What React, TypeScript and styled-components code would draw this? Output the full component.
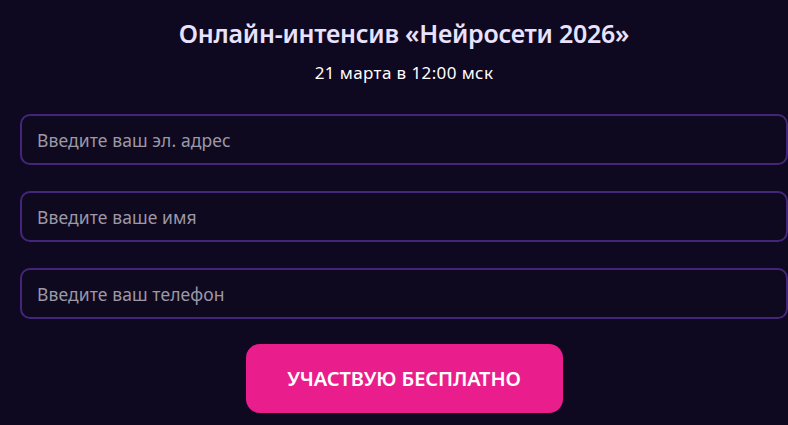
import styled, { createGlobalStyle } from "styled-components";

const GlobalStyle = createGlobalStyle`
  html, body {
    margin: 0;
    padding: 0;
    background: #0e0820;
    font-family: "Noto Sans", "Open Sans", sans-serif;
  }
`;

const Page = styled.div`
  padding: 0 0 0 20px;
  overflow: hidden;
`;

const Form = styled.form`
  width: 768px;
  display: flex;
  flex-direction: column;
  align-items: center;
`;

const Title = styled.h1`
  margin: 17px 0 0;
  font-size: 25px;
  line-height: 32px;
  font-weight: 600;
  color: #e8e2ff;
  letter-spacing: -0.25px;
`;

const Subtitle = styled.p`
  margin: 12px 0 0;
  font-size: 17px;
  line-height: 24px;
  color: #ffffff;
  letter-spacing: 0.4px;
`;

const Fields = styled.div`
  align-self: stretch;
  display: flex;
  flex-direction: column;
  gap: 26px;
  margin-top: 29px;
`;

const Input = styled.input`
  box-sizing: border-box;
  width: 100%;
  height: 51px;
  padding: 0 15px;
  border: 2px solid #43267a;
  border-radius: 10px;
  background: #0f0920;
  color: #fff;
  font-family: inherit;
  font-size: 17.5px;
  letter-spacing: 0.1px;
  outline: none;

  &::placeholder {
    color: #9c98a6;
  }
`;

const Submit = styled.button`
  margin-top: 25px;
  width: 317px;
  height: 69px;
  border: none;
  border-radius: 14px;
  background: #e91e8c;
  color: #fff;
  font-family: inherit;
  font-size: 20px;
  font-weight: 600;
  text-transform: uppercase;
  letter-spacing: -0.1px;
  cursor: pointer;
`;

const App = () => {
  return (
    <>
      <GlobalStyle />
      <Page>
        <Form onSubmit={(e) => e.preventDefault()}>
          <Title>Онлайн-интенсив «Нейросети 2026»</Title>
          <Subtitle>21 марта в 12:00 мск</Subtitle>
          <Fields>
            <Input type="email" placeholder="Введите ваш эл. адрес" />
            <Input type="text" placeholder="Введите ваше имя" />
            <Input type="tel" placeholder="Введите ваш телефон" />
          </Fields>
          <Submit type="submit">Участвую бесплатно</Submit>
        </Form>
      </Page>
    </>
  );
};

export default App;
